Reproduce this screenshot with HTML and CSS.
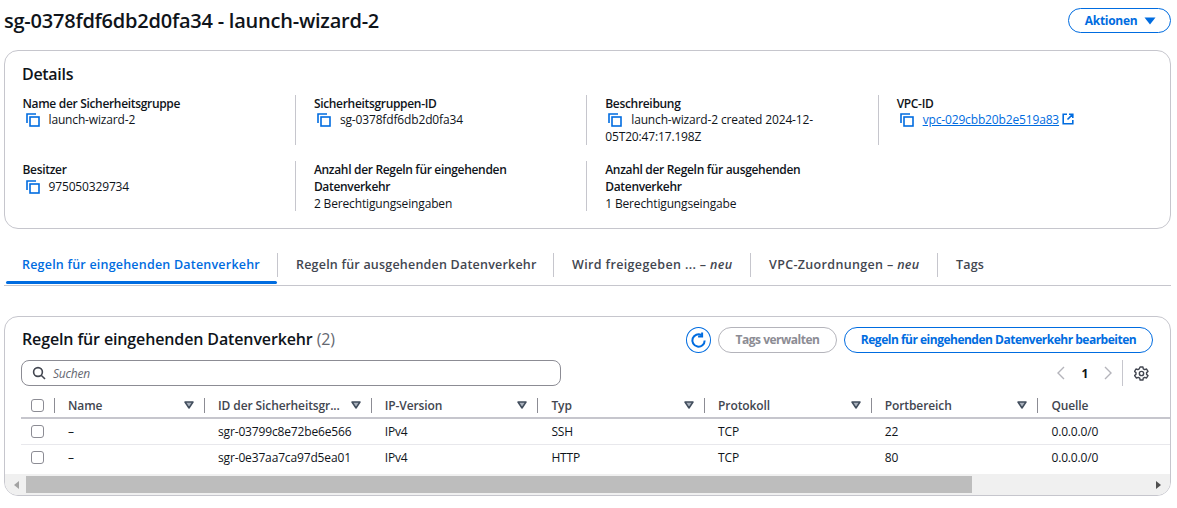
FILE: index.html
```html
<!DOCTYPE html>
<html lang="de">
<head>
  <meta charset="UTF-8">
  <title>sg-0378fdf6db2d0fa34 - launch-wizard-2</title>
  <meta name="viewport" content="width=device-width, initial-scale=1">
  <link rel="stylesheet" href="styles.css">
</head>
<body>

<svg class="defs" width="0" height="0">
  <symbol id="copy" viewBox="0 0 14 14">
    <path d="M1 10V1h9" fill="none" stroke="currentColor" stroke-width="1.6"/>
    <rect x="4" y="4" width="9" height="9" fill="none" stroke="currentColor" stroke-width="1.6"/>
  </symbol>
  <symbol id="caret" viewBox="0 0 10 8">
    <path d="M1 1h8L5 7z" fill="#aab2bd" stroke="#414d5c" stroke-width="1.5" stroke-linejoin="round"/>
  </symbol>
</svg>

<header class="page-head">
  <h1>sg-0378fdf6db2d0fa34 - launch-wizard-2</h1>
  <button class="btn btn-actions">Aktionen <svg class="tri" viewBox="0 0 12 8" width="12" height="8"><path d="M0.500 0.500h11L6 7.500z" fill="currentColor"/></svg></button>
</header>

<section class="card details">
  <h2>Details</h2>
  <div class="details-grid">
    <div class="item">
      <div class="label">Name der Sicherheitsgruppe</div>
      <div class="value"><svg class="ico-copy"><use href="#copy"/></svg>launch-wizard-2</div>
    </div>
    <div class="item">
      <div class="label">Sicherheitsgruppen-ID</div>
      <div class="value"><svg class="ico-copy"><use href="#copy"/></svg>sg-0378fdf6db2d0fa34</div>
    </div>
    <div class="item">
      <div class="label">Beschreibung</div>
      <div class="value"><svg class="ico-copy"><use href="#copy"/></svg>launch-wizard-2 created 2024-12-<wbr>05T20:47:17.198Z</div>
    </div>
    <div class="item last">
      <div class="label">VPC-ID</div>
      <div class="value"><svg class="ico-copy"><use href="#copy"/></svg><a href="#">vpc-029cbb20b2e519a83</a>
        <svg class="ico-ext" viewBox="0 0 12 12"><path d="M5 1.200H1.200v9.600h9.600V7M7 1.200h3.800V5M10.600 1.400L5.500 6.500" fill="none" stroke="currentColor" stroke-width="1.600"/></svg>
      </div>
    </div>
    <div class="item">
      <div class="label">Besitzer</div>
      <div class="value plain"><svg class="ico-copy"><use href="#copy"/></svg>975050329734</div>
    </div>
    <div class="item">
      <div class="label">Anzahl der Regeln für eingehenden Datenverkehr</div>
      <div class="value plain">2 Berechtigungseingaben</div>
    </div>
    <div class="item last">
      <div class="label">Anzahl der Regeln für ausgehenden Datenverkehr</div>
      <div class="value plain">1 Berechtigungseingabe</div>
    </div>
  </div>
</section>

<nav class="tabs">
  <a class="tab active tab-in" href="#">Regeln für eingehenden Datenverkehr</a>
  <a class="tab tab-out" href="#">Regeln für ausgehenden Datenverkehr</a>
  <a class="tab tab-share" href="#">Wird freigegeben ... – <em>neu</em></a>
  <a class="tab tab-vpc" href="#">VPC-Zuordnungen – <em>neu</em></a>
  <a class="tab tab-tags" href="#">Tags</a>
</nav>

<section class="card rules">
  <div class="rules-head">
    <h2>Regeln für eingehenden Datenverkehr <span class="count">(2)</span></h2>
    <div class="actions">
      <button class="btn-round" aria-label="Aktualisieren">
        <svg viewBox="0 0 16 16" width="17" height="17"><path d="M13.800 8A5.800 5.800 0 1 1 10.800 2.900" fill="none" stroke="currentColor" stroke-width="1.900"/><path d="M11.400 0.500v3.700H7.600" fill="none" stroke="currentColor" stroke-width="1.900"/></svg>
      </button>
      <button class="btn btn-off">Tags verwalten</button>
      <button class="btn btn-edit">Regeln für eingehenden Datenverkehr bearbeiten</button>
    </div>
  </div>

  <div class="rules-tools">
    <label class="search">
      <svg viewBox="0 0 14 14" width="14" height="14"><circle cx="6" cy="6" r="4.400" fill="none" stroke="currentColor" stroke-width="1.600"/><path d="M9.200 9.200L13 13" stroke="currentColor" stroke-width="1.600"/></svg>
      <span>Suchen</span>
    </label>
    <div class="pager">
      <svg class="chev" viewBox="0 0 8 14" width="8" height="14"><path d="M7 1L1 7l6 6" fill="none" stroke="currentColor" stroke-width="1.400"/></svg>
      <b>1</b>
      <svg class="chev" viewBox="0 0 8 14" width="8" height="14"><path d="M1 1l6 6-6 6" fill="none" stroke="currentColor" stroke-width="1.400"/></svg>
      <span class="pager-sep"></span>
      <svg class="gear" viewBox="0 0 16 16" width="15" height="15"><path d="M6.500 1h3l.4 2 1.500.9 2-.7 1.500 2.600-1.500 1.300v1.800l1.500 1.300-1.500 2.600-2-.7-1.500.9-.4 2h-3l-.4-2-1.500-.9-2 .7L.6 10.200l1.500-1.300V7.100L.6 5.800l1.500-2.600 2 .7 1.500-.9z" fill="none" stroke="currentColor" stroke-width="1.500" stroke-linejoin="round"/><circle cx="8" cy="8" r="2.300" fill="none" stroke="currentColor" stroke-width="1.500"/></svg>
    </div>
  </div>

  <div class="table-clip">
    <table>
      <thead>
        <tr>
          <th class="col-check"><div class="th"><i class="box"></i></div></th>
          <th class="col-name"><div class="th"><span>Name</span><svg class="caret"><use href="#caret"/></svg></div></th>
          <th><div class="th"><span>ID der Sicherheitsgr...</span><svg class="caret"><use href="#caret"/></svg></div></th>
          <th><div class="th"><span>IP-Version</span><svg class="caret"><use href="#caret"/></svg></div></th>
          <th><div class="th"><span>Typ</span><svg class="caret"><use href="#caret"/></svg></div></th>
          <th><div class="th"><span>Protokoll</span><svg class="caret"><use href="#caret"/></svg></div></th>
          <th><div class="th"><span>Portbereich</span><svg class="caret"><use href="#caret"/></svg></div></th>
          <th><div class="th no-sep"><span>Quelle</span></div></th>
        </tr>
      </thead>
      <tbody>
        <tr>
          <td class="cell-check"><i class="box"></i></td>
          <td>–</td><td>sgr-03799c8e72be6e566</td><td>IPv4</td><td>SSH</td><td>TCP</td><td>22</td><td>0.0.0.0/0</td>
        </tr>
        <tr>
          <td class="cell-check"><i class="box"></i></td>
          <td>–</td><td>sgr-0e37aa7ca97d5ea01</td><td>IPv4</td><td>HTTP</td><td>TCP</td><td>80</td><td>0.0.0.0/0</td>
        </tr>
      </tbody>
    </table>
  </div>

  <div class="hscroll">
    <span class="arrow arrow-left"></span>
    <div class="hscroll-track"><div class="hscroll-thumb"></div></div>
    <span class="arrow arrow-right"></span>
  </div>
</section>

</body>
</html>
```

FILE: styles.css
```css
* {
  box-sizing: border-box;
}

body {
  margin: 0;
  padding: 0 6px 0 4px;
  background: #fff;
  color: #0f141a;
  font-family: 'Open Sans', 'Noto Sans', sans-serif;
  font-size: 12px;
  line-height: 17px;
}

.defs {
  position: absolute;
}

h1, h2 {
  margin: 0;
}

button {
  font-family: inherit;
  cursor: pointer;
}

/* page header */

.page-head {
  display: flex;
  justify-content: space-between;
  align-items: flex-start;
  height: 50px;
  padding-top: 8px;
}

.page-head h1 {
  font-size: 20px;
  line-height: 26px;
  font-weight: 600;
  letter-spacing: -0.23px;
}

.btn {
  height: 25px;
  background: #fff;
  border: 1px solid #006ce0;
  border-radius: 13px;
  color: #006ce0;
  font-size: 12px;
  font-weight: 700;
  letter-spacing: -0.5px;
  padding: 0;
}

.btn-actions {
  width: 103px;
  padding-left: 2px;
  letter-spacing: -0.3px;
}

.tri {
  margin-left: 4px;
}

/* cards */

.card {
  border: 1px solid #c6c6cd;
  border-radius: 14px;
  background: #fff;
}

.details {
  height: 179px;
  padding: 13px 0 0 17px;
}

.details h2 {
  font-size: 16px;
  line-height: 20px;
  font-weight: 600;
  letter-spacing: -0.3px;
  margin-bottom: 11px;
}

.details-grid {
  display: grid;
  grid-template-columns: repeat(4, 1fr);
  grid-auto-rows: 50px;
  column-gap: 18px;
  row-gap: 16px;
  padding-left: 0.5px;
}

.item {
  border-right: 1px solid #c6c6cd;
  padding-right: 40px;
}

.item.last {
  border-right: 0;
}

.label {
  font-weight: 600;
  letter-spacing: -0.32px;
}

.value {
  margin-top: -1px;
  letter-spacing: -0.15px;
}

.value.plain {
  margin-top: 0;
}

.ico-copy {
  width: 14px;
  height: 14px;
  margin: 0 9px 0 3px;
  color: #006ce0;
  vertical-align: -3px;
}

.value a {
  color: #006ce0;
}

.ico-ext {
  width: 12px;
  height: 12px;
  color: #006ce0;
  vertical-align: -1px;
}

/* tabs */

.tabs {
  display: flex;
  height: 37px;
  margin-top: 20px;
  border-bottom: 1px solid #c6c6cd;
  padding-top: 4px;
}

.tab {
  position: relative;
  height: 24px;
  padding-left: 18px;
  border-right: 1px solid #c6c6cd;
  color: #424650;
  font-size: 12.5px;
  font-weight: 600;
  line-height: 23px;
  text-decoration: none;
  letter-spacing: 0.21px;
  white-space: nowrap;
}

.tab-in {
  width: 274px;
}

.tab-out {
  width: 276px;
}

.tab-share {
  width: 197px;
  letter-spacing: 0.36px;
}

.tab-vpc {
  width: 187px;
  letter-spacing: 0.34px;
}

.tab-tags {
  border-right: 0;
}

.tab.active {
  color: #006ce0;
}

/* underline of the open tab, sits over the tab row's rule */
.tab.active::after {
  content: "";
  position: absolute;
  left: 2px;
  right: 0;
  top: 28px;
  height: 3px;
  border-radius: 2px;
  background: #006ce0;
}

.tab em {
  font-style: italic;
}

/* rules table */

.rules {
  height: 180px;
  margin-top: 30px;
  overflow: hidden;
}

.rules-head {
  display: flex;
  justify-content: space-between;
  align-items: center;
  height: 26px;
  margin-top: 10px;
  padding: 0 17px 0 17px;
}

.rules-head h2 {
  font-size: 16px;
  line-height: 20px;
  font-weight: 600;
  letter-spacing: -0.13px;
  margin-bottom: 2px;
}

.count {
  color: #656871;
  font-weight: 400;
}

.actions {
  display: flex;
  gap: 7px;
  align-items: center;
}

.btn-round {
  display: flex;
  align-items: center;
  justify-content: center;
  width: 25px;
  height: 26px;
  padding: 0;
  border: 1px solid #006ce0;
  border-radius: 50%;
  background: #fff;
  color: #006ce0;
}

.rules-head .btn {
  height: 26px;
  padding-bottom: 2px;
}

.btn-off {
  width: 119px;
  border-color: #b4b4bb;
  color: #8c8c94;
  cursor: default;
}

.btn-edit {
  width: 309px;
}

.rules-tools {
  display: flex;
  justify-content: space-between;
  align-items: center;
  height: 26px;
  margin-top: 7px;
  padding: 0 21px 0 16px;
}

.search {
  display: flex;
  align-items: center;
  gap: 7px;
  width: 540px;
  height: 26px;
  padding-left: 10px;
  border: 1px solid #8c8c94;
  border-radius: 8px;
  color: #424650;
}

.search span {
  font-style: italic;
  font-size: 12px;
  letter-spacing: -0.2px;
  color: #656871;
}

.pager {
  display: flex;
  align-items: center;
  height: 26px;
  color: #0f141a;
}

.pager b {
  width: 14px;
  margin: 0 12px 0 13px;
  text-align: center;
}

.chev {
  color: #b4b4bb;
}

.pager-sep {
  width: 1px;
  height: 26px;
  margin: 0 11px 0 10px;
  background: #c6c6cd;
}

.gear {
  color: #424650;
}

.table-clip {
  overflow: hidden;
  height: 83px;
  margin-top: 5px;
  margin-left: 16px;
}

table {
  table-layout: fixed;
  width: 1184px;
  border-collapse: collapse;
}

th {
  width: 166.7px;
  height: 27px;
  padding: 2px 0 0;
  border-bottom: 2px solid #c6c6cd;
  text-align: left;
  font-weight: 600;
  color: #424650;
}

th.col-check {
  width: 34px;
}

th.col-name {
  width: 150px;
}

.th {
  display: flex;
  align-items: center;
  justify-content: space-between;
  height: 15px;
  padding: 0 10px 0 13px;
  border-right: 1px solid #8c8c94;
  letter-spacing: -0.1px;
}

th.col-check .th {
  padding: 0 0 0 10px;
}

.th.no-sep {
  border-right: 0;
}

.caret {
  width: 10px;
  height: 8px;
  flex: none;
}

td {
  height: 26px;
  padding: 0 0 0 13px;
  border-bottom: 1px solid #e8e8ec;
  letter-spacing: -0.15px;
}

tbody tr:last-child td {
  border-bottom: 0;
}

td.cell-check {
  padding-left: 10px;
}

.box {
  display: block;
  width: 13px;
  height: 13px;
  border: 1.5px solid #8c8c94;
  border-radius: 3px;
}

/* drawn scrollbar, the reference shows one at the foot of the table */
.hscroll {
  display: flex;
  align-items: center;
  height: 21px;
  background: #f0f0f0;
}

.hscroll-track {
  flex: 1;
  height: 17px;
  padding-left: 7px;
}

.hscroll-thumb {
  width: 946px;
  height: 17px;
  background: #bdbdbd;
}

.arrow {
  flex: none;
  width: 0;
  height: 0;
  border-top: 4px solid transparent;
  border-bottom: 4px solid transparent;
}

.arrow-left {
  margin-left: 9px;
  border-right: 5px solid #a3a3a3;
}

.arrow-right {
  margin-right: 9px;
  border-left: 5px solid #505050;
}
```
